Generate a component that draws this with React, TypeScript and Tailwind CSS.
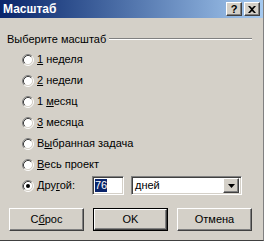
import React from 'react';

function Radio({ checked }: { checked?: boolean }) {
  return (
    <svg width="12" height="12" viewBox="0 0 12 12" className="shrink-0">
      <circle cx="6" cy="6" r="4.5" fill="#ffffff" />
      <path d="M2.11 9.89 A5.5 5.5 0 0 1 9.89 2.11" fill="none" stroke="#808080" strokeWidth="1" />
      <path d="M9.89 2.11 A5.5 5.5 0 0 1 2.11 9.89" fill="none" stroke="#ffffff" strokeWidth="1" />
      <path d="M2.82 9.18 A4.5 4.5 0 0 1 9.18 2.82" fill="none" stroke="#404040" strokeWidth="1" />
      <path d="M9.18 2.82 A4.5 4.5 0 0 1 2.82 9.18" fill="none" stroke="#d4d0c8" strokeWidth="1" />
      {checked && <circle cx="6" cy="6" r="2" fill="#000000" />}
    </svg>
  );
}

function Option({ checked, children }: { checked?: boolean; children: React.ReactNode }) {
  return (
    <div className="flex h-[21px] items-center gap-[3px] pl-[15px]">
      <Radio checked={checked} />
      <span>{children}</span>
    </div>
  );
}

const raised =
  'border border-t-white border-l-white border-r-[#404040] border-b-[#404040] shadow-[inset_-1px_-1px_0_#808080,inset_1px_1px_0_#d4d0c8] bg-[#d4d0c8]';
const sunken =
  'border border-t-[#808080] border-l-[#808080] border-r-white border-b-white shadow-[inset_1px_1px_0_#404040,inset_-1px_-1px_0_#d4d0c8] bg-white';

export default function App() {
  return (
    <div
      className="flex h-[241px] w-[264px] flex-col border-r border-b border-r-[#808080] border-b-[#404040] bg-[#d4d0c8] text-[11px] text-black"
      style={{ fontFamily: '"Liberation Sans", Arial, sans-serif' }}
    >
      <div className="flex h-[18px] items-center justify-between bg-gradient-to-r from-[#0a246a] to-[#a6caf0] pl-[3px] pr-[3px]">
        <span className="text-[12px] font-bold text-white">Масштаб</span>
        <div className="flex gap-[2px]">
          <div className={`${raised} flex h-[14px] w-[16px] items-center justify-center text-[11px] font-bold leading-none`}>?</div>
          <div className={`${raised} flex h-[14px] w-[16px] items-center justify-center`}>
            <svg width="8" height="7" viewBox="0 0 8 7">
              <path d="M0 0h2l2 2 2-2h2L5 3.5 8 7H6L4 5 2 7H0l3-3.5z" fill="#000" />
            </svg>
          </div>
        </div>
      </div>

      <div className="flex flex-1 flex-col pl-[7px] pr-[11px] pt-[14px]">
        <div className="flex h-[14px] items-center gap-[3px]">
          <span>Выберите масштаб</span>
          <div className="h-[2px] flex-1 border-t border-t-[#808080] border-b border-b-white" />
        </div>

        <div className="mt-[3px] flex flex-col">
          <Option><u>1</u> неделя</Option>
          <Option><u>2</u> недели</Option>
          <Option>1 <u>м</u>есяц</Option>
          <Option><u>3</u> месяца</Option>
          <Option>В<u>ы</u>бранная задача</Option>
          <Option><u>В</u>есь проект</Option>
          <div className="flex h-[21px] items-center pl-[15px]">
            <Radio checked />
            <span className="ml-[3px] w-[55px]">Дру<u>г</u>ой:</span>
            <div className={`${sunken} flex h-[19px] w-[32px] items-center pl-[2px]`}>
              <span className="bg-[#0a246a] leading-[13px] text-white">76</span>
            </div>
            <div className={`${sunken} ml-[7px] flex h-[19px] w-[111px] items-center justify-between pl-[3px] pr-[2px]`}>
              <span>дней</span>
              <div className={`${raised} flex h-[15px] w-[16px] items-center justify-center`}>
                <svg width="7" height="4" viewBox="0 0 7 4">
                  <path d="M0 0h7L3.5 4z" fill="#000" />
                </svg>
              </div>
            </div>
          </div>
        </div>

        <div className="mt-[12px] flex gap-[9px] pl-[2px]">
          <button className={`${raised} h-[23px] w-[75px]`}>С<u>б</u>рос</button>
          <div className="h-[23px] w-[75px] border border-black">
            <button className={`${raised} h-full w-full`}>OK</button>
          </div>
          <button className={`${raised} h-[23px] w-[75px]`}>Отмена</button>
        </div>
      </div>
    </div>
  );
}
